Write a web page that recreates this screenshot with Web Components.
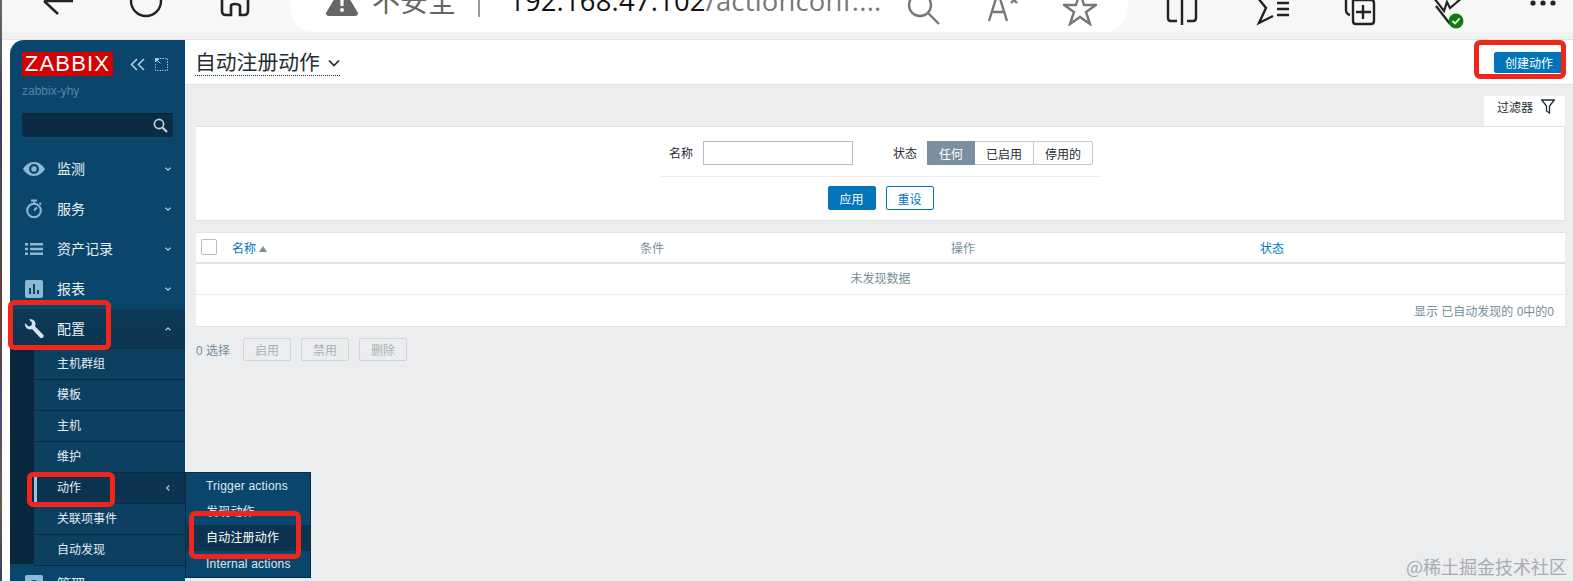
<!DOCTYPE html>
<html lang="zh">
<head>
<meta charset="utf-8">
<title>自动注册动作</title>
<style>
html,body{margin:0;height:581px;overflow:hidden;background:#f7f7f7}
body{font:12px "Liberation Sans","Noto Sans CJK SC",sans-serif;color:#1f2c33;display:flex;position:relative}
</style>
</head>
<body>
<page-strip></page-strip>
<div style="flex:1;min-width:0;display:flex;flex-direction:column">
  <browser-bar></browser-bar>
  <div style="display:flex;flex:1;min-height:0;background:#fff">
    <zbx-sidebar></zbx-sidebar>
    <zbx-content></zbx-content>
  </div>
</div>
<red-mark style="left:8px;top:300px;width:103px;height:50px"></red-mark>
<red-mark style="left:27px;top:472px;width:88px;height:35px"></red-mark>
<red-mark style="left:189px;top:511px;width:112px;height:48px"></red-mark>
<red-mark style="left:1474px;top:40px;width:92px;height:39px"></red-mark>
<water-mark>@稀土掘金技术社区</water-mark>
<script>
function def(name,css,html){
  customElements.define(name,class extends HTMLElement{
    constructor(){super();this.attachShadow({mode:'open'});
      const h=typeof html==='function'?html(this):html;
      this.shadowRoot.innerHTML='<style>'+css+'</style>'+h;}
  });
}
def('page-strip',':host{display:block;width:2px;height:581px;background:linear-gradient(#5d6b68 0,#55555a 60px,#3f3a6a 110px,#4a4a52 200px,#6b3b33 320px,#4d4a73 400px,#6a5a4e 500px,#33445a 581px)}','');
def('red-mark',':host{position:absolute;box-sizing:border-box;border:5px solid #f0251b;border-radius:6px;display:block;pointer-events:none;z-index:5}','');
def('water-mark',':host{position:absolute;right:6px;bottom:4px;font:18px "Noto Sans CJK SC",sans-serif;color:#a9acaf;z-index:6;line-height:22px}','<slot></slot>');
def('browser-bar',`
:host{display:block;height:40px;flex:none;box-sizing:border-box;border-bottom:1px solid #e4e4e4;background:linear-gradient(#f7f7f7 0,#f7f7f7 32px,#f0f0f0 33px,#f0f0f0 38px,#f5f5f5 39px);overflow:hidden}
.row{display:flex;align-items:flex-start;height:38px}
svg{display:block;flex:none;fill:none;stroke:#222;stroke-width:2.4}
.pill{margin-left:40px;width:838px;height:32px;background:#fff;border-radius:0 0 24px 24px;display:flex;align-items:flex-start;flex:none;white-space:nowrap;overflow:hidden}
.warn{margin:-14px 0 0 14px;font:28px/28px "Noto Sans CJK SC",sans-serif;color:#666}
.sep{width:2px;height:17px;background:#999;margin-left:22px}
.url{margin:-14px 0 0 29px;font:27.4px/30px "Open Sans",sans-serif;color:#111;letter-spacing:.2px}
.url span{color:#777}
`,`<div class="row">
<svg style="margin-left:38px" width="34" height="20" viewBox="0 0 34 20"><path d="M33 1H4M4 1L18 14"/></svg>
<svg style="margin-left:54px" width="36" height="20" viewBox="0 0 36 20"><circle cx="18" cy="1" r="15"/></svg>
<svg style="margin-left:56px" width="30" height="20" viewBox="0 0 30 20"><path d="M2-6V11Q2 15 6 15H11V6Q11 4 15 4T20 6V15H24Q28 15 28 11V-6" stroke-width="2.6"/></svg>
<div class="pill">
 <svg style="margin-left:36px;fill:#666;stroke:none" width="32" height="20" viewBox="0 0 32 20"><path d="M16-14L32 13Q32 16 29 16H3Q0 16 0 13Z"/><path fill="#fff" d="M14-4H18L17.4 6H14.6ZM16 8a2 2 0 1 1 0 4a2 2 0 1 1 0-4"/></svg>
 <div class="warn">不安全</div>
 <div class="sep"></div>
 <div class="url">192.168.47.102<span>/actionconf....</span></div>
 <svg style="margin-left:26px;stroke:#777" width="34" height="26" viewBox="0 0 34 26"><circle cx="13" cy="5" r="11"/><path d="M21 13L32 24"/></svg>
 <svg style="margin-left:46px;stroke:#777" width="34" height="24" viewBox="0 0 34 24"><path d="M2 21L11-8L20 21M5 12H17M24 3L27 0L30 3"/></svg>
 <svg style="margin-left:42px;stroke:#777" width="34" height="26" viewBox="0 0 34 26"><path d="M17-8L21 5H33L23 12L27 24L17 17L7 24L11 12L1 5H13Z"/></svg>
</div>
<svg style="margin-left:38px" width="32" height="26" viewBox="0 0 32 26"><path d="M11-4H2V18Q2 21 5 21H11M21-4H30V18Q30 21 27 21H21M16-4V25"/></svg>
<svg style="margin-left:57px" width="36" height="26" viewBox="0 0 36 26"><path d="M3-2L11 8L4 23L18 16M22 3H34M22 9H34M22 15H34"/></svg>
<svg style="margin-left:53px" width="32" height="26" viewBox="0 0 32 26"><path d="M2-2V10Q2 14 6 15M9 0H27Q30 0 30 3V21Q30 24 27 24H12Q9 24 9 21ZM19 5V19M12 12H27"/></svg>
<svg style="margin-left:56px" width="36" height="30" viewBox="0 0 36 30"><path d="M2-2L12 11L15 2L18 8L24 3L32 -4M4 6L18 24" stroke-width="2.2"/><circle cx="24" cy="21" r="7.5" fill="#107c10" stroke="none"/><path d="M20.5 21L23 23.5L27.5 18.5" stroke="#fff" stroke-width="1.8"/></svg>
<svg style="margin-left:60px" width="30" height="10" viewBox="0 0 30 10"><g fill="#222" stroke="none"><circle cx="5" cy="3" r="2.6"/><circle cx="15" cy="3" r="2.6"/><circle cx="25" cy="3" r="2.6"/></g></svg>
</div>`);
const chev=(d)=>`<svg width="8" height="8" viewBox="0 0 8 8" fill="none" stroke="#a9c9dc" stroke-width="1.3" style="display:block"><path d="${d}"/></svg>`;
const DOWN='M1.5 2.8L4 5.2L6.5 2.8',UP='M1.5 5.2L4 2.8L6.5 5.2',LEFT='M5.2 1.5L2.8 4L5.2 6.5';
def('zbx-nav-item',`
:host{display:flex;align-items:center;height:40px;box-sizing:border-box;font-size:14px;color:#e8f1f6;flex:none}
:host([open]){background:linear-gradient(#0d3a57,#0b3450)}
.ic{width:24px;margin:0 0 1px 12px;height:24px;display:flex;align-items:center;justify-content:center;flex:none}
.t{margin-left:11px;flex:1;padding-bottom:3px}
.c{margin-right:13px}
`,(el)=>`<div class="ic"><slot name="icon"></slot></div><div class="t"><slot></slot></div><div class="c">${chev(el.hasAttribute('open')?UP:DOWN)}</div>`);
def('zbx-sub-item',`
:host{display:flex;align-items:center;height:31px;box-sizing:border-box;border-bottom:1px solid #082b42;padding-left:23px;color:#e3edf3;font-size:12px;position:relative;flex:none;background:#0d3f60}
:host([active]){background:#0b3350;padding-left:20px;border-left:3px solid #8fc4ec}
.t{flex:1;padding-bottom:3px}.c{margin-right:13px}
`,(el)=>`<div class="t"><slot></slot></div>${el.hasAttribute('active')?`<div class="c">${chev(LEFT)}</div>`:''}<slot name="fly"></slot>`);
def('zbx-flyout',`
:host{position:absolute;left:100%;top:-1px;width:126px;box-sizing:border-box;border:1px solid #082b42;background:#0a466c;z-index:3;display:block}
div{height:26px;line-height:26px;padding-left:20px;letter-spacing:.2px;color:#dfeaf1;white-space:nowrap}
.on{background:#0c3350;color:#fff}
`,`<div>Trigger actions</div><div>发现动作</div><div class="on">自动注册动作</div><div>Internal actions</div>`);
def('zbx-sidebar',`
:host{display:block;width:175px;margin-left:8px;height:541px;background:#0a466c;border-radius:14px 0 0 0;flex:none;position:relative;color:#fff}
.top{display:flex;align-items:flex-start;padding:12px 0 0 12px;height:24px}
.logo{width:91px;height:24px;background:#d40000;color:#fff;font:22px/24px "Liberation Sans",sans-serif;text-align:center;letter-spacing:1.2px}
.top svg{display:block;fill:none;stroke:#a9cfe6}
.host{margin:8px 0 0 12px;font-size:12px;line-height:14px;color:#4f86a8}
.search{margin:15px 12px 0;height:24px;background:#0b2c42;border-radius:2px;display:flex;justify-content:flex-end;align-items:center;padding-right:5px;border-top:1px solid #07243a;box-sizing:border-box}
nav{margin-top:12px;display:flex;flex-direction:column}
.sub{background:#07273c;padding-left:24px;height:215px;display:flex;flex-direction:column}
svg.i{display:block;fill:#8fb9d3}
`,`<div class="top"><div class="logo">ZABBIX</div>
<svg style="margin:6px 0 0 17px" width="15" height="13" viewBox="0 0 15 13" stroke-width="1.6"><path d="M7 1L1.5 6.5L7 12M14 1L8.5 6.5L14 12"/></svg>
<svg style="margin:6px 0 0 10px" width="13" height="13" viewBox="0 0 13 13" stroke-width="1" stroke-dasharray="1.3 1.3"><path d="M5 .5H12.5V12.5H.5V5"/><path d="M1 1L5.5 5.5M.5 .5H4L.5 4Z" stroke-dasharray="none" fill="#a9cfe6"/></svg></div>
<div class="host">zabbix-yhy</div>
<div class="search"><svg width="15" height="15" viewBox="0 0 15 15" fill="none" stroke="#b9d0dd" stroke-width="1.7"><circle cx="6" cy="6" r="4.6"/><path d="M9.5 9.5L14 14" stroke-width="2.2"/></svg></div>
<nav>
<zbx-nav-item><svg class="i" slot="icon" width="22" height="16" viewBox="0 0 22 16"><path fill-rule="evenodd" d="M11 1C6 1 2 4.5 0 8c2 3.5 6 7 11 7s9-3.500 11-7c-2-3.500-6-7-11-7zM11 3a5 5 0 1 1 0 10a5 5 0 1 1 0-10z"/><circle cx="11" cy="8" r="2.700"/></svg>监测</zbx-nav-item>
<zbx-nav-item><svg class="i" slot="icon" width="18" height="20" viewBox="0 0 18 20" style="fill:none;stroke:#8fb9d3"><circle cx="9" cy="11.500" r="6.800" stroke-width="2"/><path d="M6 1.500H12M9 2V4.500M9 11.500L12 8.500M14.500 4L16 5.500" stroke-width="1.800"/></svg>服务</zbx-nav-item>
<zbx-nav-item><svg class="i" slot="icon" width="18" height="12" viewBox="0 0 18 12"><path d="M0 0H3V2.500H0ZM5 0H18V2.500H5ZM0 4.700H3V7.200H0ZM5 4.700H18V7.200H5ZM0 9.400H3V11.900H0ZM5 9.400H18V11.900H5Z"/></svg>资产记录</zbx-nav-item>
<zbx-nav-item><svg class="i" slot="icon" width="18" height="18" viewBox="0 0 18 18"><path fill-rule="evenodd" d="M2 0H16Q18 0 18 2V16Q18 18 16 18H2Q0 18 0 16V2Q0 0 2 0ZM4 8V14H6V8ZM8 4V14H10V4ZM12 10V14H14V10Z"/></svg>报表</zbx-nav-item>
<zbx-nav-item open><svg class="i" slot="icon" width="20" height="20" viewBox="0 0 20 20" style="fill:#d5e4ee"><path d="M1 4L4.500 7.500L7.500 6.500L8 3.500L5 .5C8 -.5 11.500 1.500 11.500 5C11.500 6 11.300 6.500 11 7.200L19 15.500C20 16.500 20 17.500 19 18.500C18 19.500 16.800 19.500 16 18.500L8 10C5 11.500 .3 9 1 4Z"/></svg>配置</zbx-nav-item>
<div class="sub">
<zbx-sub-item>主机群组</zbx-sub-item>
<zbx-sub-item>模板</zbx-sub-item>
<zbx-sub-item>主机</zbx-sub-item>
<zbx-sub-item>维护</zbx-sub-item>
<zbx-sub-item active>动作<zbx-flyout slot="fly"></zbx-flyout></zbx-sub-item>
<zbx-sub-item>关联项事件</zbx-sub-item>
<zbx-sub-item>自动发现</zbx-sub-item>
</div>
<zbx-nav-item><svg class="i" slot="icon" width="18" height="18" viewBox="0 0 18 18"><path fill-rule="evenodd" d="M2 0H16Q18 0 18 2V16Q18 18 16 18H2Q0 18 0 16V2Q0 0 2 0ZM9 5a4 4 0 1 0 0 8a4 4 0 1 0 0-8z"/></svg>管理</zbx-nav-item>
</nav>`);
def('zbx-btn',`
:host{display:inline-flex;align-items:center;justify-content:center;box-sizing:border-box;height:24px;width:48px;border-radius:2px;border:1px solid #0275b8;background:#fff;color:#0275b8;font-size:12px}
:host([primary]){background:#0275b8;color:#fff}
:host([off]){height:23px;border-color:#d3d6d9;background:#ebedef;color:#acb0b4}
`,'<slot></slot>');
def('zbx-filter',`
:host{display:block;background:#fff;height:95px;box-sizing:border-box;border-top:1px solid #e0e3e5;border-bottom:1px solid #e0e3e5;border-right:1px solid #e6e8ea}
.f{width:441px;margin:0 auto;padding:14px 0 0 1px}
.row{display:flex;align-items:center;height:24px;padding-bottom:11px;border-bottom:1px solid #eceeef;padding-left:9px}
.lb{color:#1f2c33;margin-right:10px;padding-bottom:2px}
.inp{width:150px;height:24px;box-sizing:border-box;border:1px solid #b7bcc0;background:#fff}
.lb2{margin-left:40px}
.seg{display:flex;height:24px;box-sizing:border-box;border:1px solid #c5c9cc;border-radius:2px}
.seg div{display:flex;align-items:center;justify-content:center;border-left:1px solid #c5c9cc}
.seg .a{background:#7b8f9e;color:#fff;width:48px;border:0;margin:-1px 0 -1px -1px}
.actions{display:flex;justify-content:center;gap:10px;padding-top:9px}
`,`<div class="f"><div class="row"><span class="lb">名称</span><div class="inp"></div><span class="lb lb2">状态</span><div class="seg"><div class="a">任何</div><div style="width:58px;border-left:0">已启用</div><div style="width:58px">停用的</div></div></div>
<div class="actions"><zbx-btn primary>应用</zbx-btn><zbx-btn>重设</zbx-btn></div></div>`);
def('zbx-table',`
:host{display:block;background:#fff;margin-top:11px;height:95px;box-sizing:border-box;border-top:1px solid #e0e3e5;border-bottom:1px solid #dfe2e4;color:#768d99}
.h{display:grid;grid-template-columns:36px 408px 311px 309px 1fr;height:31px;box-sizing:border-box;align-items:center;border-bottom:2px solid #e1e3e5;padding-bottom:1px}
.cb{width:16px;height:16px;box-sizing:border-box;border:1px solid #b7bcc0;border-radius:2px;margin-left:5px;background:#fff}
.l{color:#0275b8}.g{color:#768d99}
.tri{display:inline-block;width:0;height:0;border:4px solid transparent;border-top:0;border-bottom:6px solid #768d99;margin-left:3px;vertical-align:1px}
.e{height:31px;box-sizing:border-box;padding-bottom:3px;display:flex;align-items:center;justify-content:center;border-bottom:1px solid #ebedef;color:#768d99}
.p{height:31px;display:flex;align-items:center;justify-content:flex-end;padding-right:11px;color:#768d99}
`,`<div class="h"><div class="cb"></div><div class="l">名称<i class="tri"></i></div><div class="g">条件</div><div class="g">操作</div><div class="l">状态</div></div>
<div class="e">未发现数据</div><div class="p">显示 已自动发现的 0中的0</div>`);
def('zbx-content',`
:host{display:block;flex:1;min-width:0;background:#ebedef;height:541px}
header{height:45px;box-sizing:border-box;background:#fff;border-bottom:1px solid #e0e3e5;display:flex;align-items:flex-start;justify-content:space-between;padding-right:9px}
.title{margin:10px 0 0 10px;font-size:20.8px;line-height:25px;height:25px;color:#1f2c33;border-bottom:1px dotted #1f2c33;display:flex;align-items:center;white-space:nowrap}
.title svg{margin-left:8px;display:block}
.new{margin-top:12px;height:21px;width:70px}
.body{padding:11px 8px 0 11px}
.tab{margin-left:auto;width:81px;height:30px;background:#fff;display:flex;align-items:center;justify-content:flex-end;gap:8px;padding:0 10px 9px 0;box-sizing:border-box}
.foot{display:flex;align-items:center;gap:10px;margin-top:11px;color:#768d99}
.foot span{margin-right:3px}
`,`<header><div class="title">自动注册动作<svg width="12" height="8" viewBox="0 0 12 8" fill="none" stroke="#1f2c33" stroke-width="1.700"><path d="M1 1.500L6 6.500L11 1.500"/></svg></div><zbx-btn primary class="new">创建动作</zbx-btn></header>
<div class="body"><div class="tab"><span>过滤器</span><svg width="14" height="15" viewBox="0 0 14 15" fill="none" stroke="#1f2c33" stroke-width="1.300"><path d="M.7 1H13.300L8.500 7V14L5.500 12V7Z"/></svg></div>
<zbx-filter></zbx-filter><zbx-table></zbx-table>
<div class="foot"><span>0 选择</span><zbx-btn off>启用</zbx-btn><zbx-btn off>禁用</zbx-btn><zbx-btn off>删除</zbx-btn></div></div>`);
</script>
</body>
</html>
